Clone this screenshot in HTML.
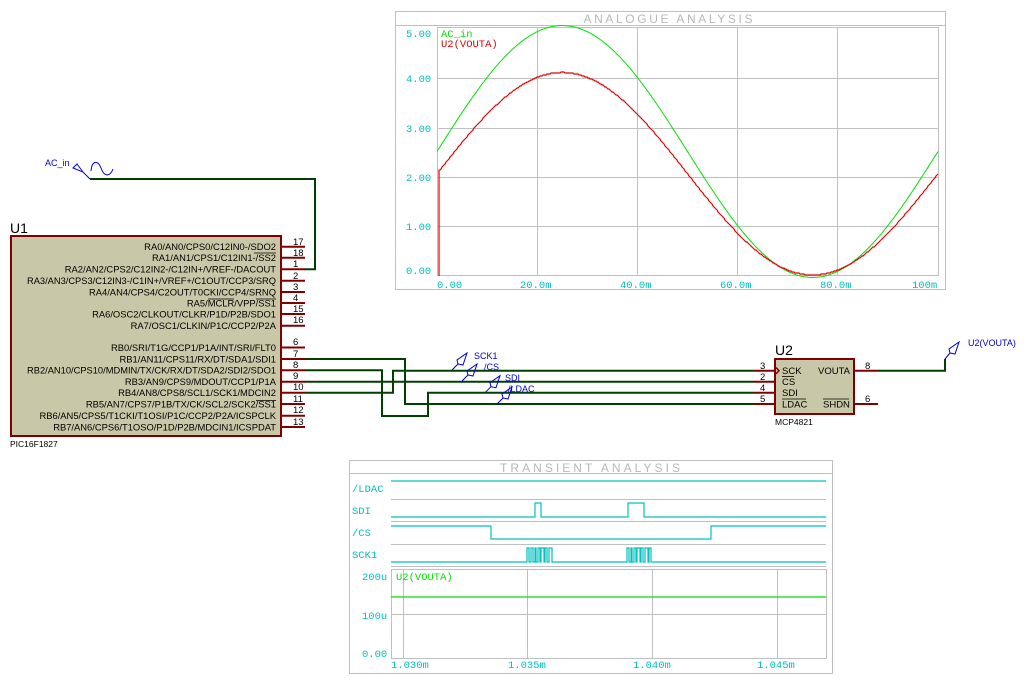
<!DOCTYPE html>
<html><head><meta charset="utf-8"><style>
html,body{margin:0;padding:0;background:#fff;width:1024px;height:685px;overflow:hidden}
svg{display:block}
.pl{font-family:"Liberation Sans",sans-serif;font-size:9.4px;fill:#000}
.pn{font-family:"Liberation Sans",sans-serif;font-size:9.5px;fill:#000}
.bl{font-family:"Liberation Sans",sans-serif;font-size:9px;fill:#0000cc}
.gm{font-family:"Liberation Mono",monospace;font-size:10.5px}
.tt{font-family:"Liberation Sans",sans-serif;font-size:12px}
</style></head><body>
<svg width="1024" height="685" viewBox="0 0 1024 685" xmlns="http://www.w3.org/2000/svg">
<!-- ANALOGUE GRAPH -->
<rect x="395.5" y="11.5" width="550" height="278" fill="#fff" stroke="#c0c0c0"/>
<line x1="395" y1="25.5" x2="946" y2="25.5" stroke="#c0c0c0"/>
<text x="668" y="23" text-anchor="middle" class="tt" fill="#b8b8b8" textLength="169" lengthAdjust="spacing">ANALOGUE ANALYSIS</text>
<g stroke="#c0c0c0" fill="none">
<rect x="437.5" y="27.5" width="501" height="248"/>
<line x1="537.5" y1="27" x2="537.5" y2="276"/><line x1="637.5" y1="27" x2="637.5" y2="276"/>
<line x1="737.5" y1="27" x2="737.5" y2="276"/><line x1="837.5" y1="27" x2="837.5" y2="276"/>
<line x1="437" y1="78.5" x2="938" y2="78.5"/><line x1="437" y1="128.5" x2="938" y2="128.5"/>
<line x1="437" y1="177.5" x2="938" y2="177.5"/><line x1="437" y1="226.5" x2="938" y2="226.5"/>
</g>
<g class="gm" fill="#00c0c0">
<text x="406" y="37">5.00</text><text x="406" y="82">4.00</text><text x="406" y="132">3.00</text>
<text x="406" y="181">2.00</text><text x="406" y="230">1.00</text><text x="406" y="274">0.00</text>
<text x="437" y="288">0.00</text><text x="520" y="288">20.0m</text><text x="620" y="288">40.0m</text>
<text x="720" y="288">60.0m</text><text x="820" y="288">80.0m</text><text x="912" y="288">100m</text>
</g>
<path id="gc" fill="none" stroke="#00e000" stroke-width="1"/>
<path id="rc" fill="none" stroke="#e00000" stroke-width="1.2"/>
<text x="441" y="37" class="gm" fill="#00e000">AC_in</text>
<text x="441" y="47" class="gm" fill="#e00000">U2(VOUTA)</text>

<!-- TRANSIENT GRAPH -->
<rect x="349.5" y="460.5" width="483" height="213" fill="#fff" stroke="#c0c0c0"/>
<line x1="349" y1="473.5" x2="833" y2="473.5" stroke="#c0c0c0"/>
<text x="590" y="472" text-anchor="middle" class="tt" fill="#b8b8b8" textLength="180" lengthAdjust="spacing">TRANSIENT ANALYSIS</text>
<g stroke="#c0c0c0" fill="none">
<line x1="391" y1="499.5" x2="826" y2="499.5"/>
<line x1="391" y1="521.5" x2="826" y2="521.5"/>
<line x1="391" y1="544.5" x2="826" y2="544.5"/>
<line x1="391" y1="566.5" x2="826" y2="566.5"/>
<rect x="391.5" y="569.5" width="435" height="89"/>
<line x1="391" y1="614.5" x2="826" y2="614.5"/>
<line x1="403.5" y1="569" x2="403.5" y2="658"/><line x1="527.5" y1="569" x2="527.5" y2="658"/>
<line x1="652.5" y1="569" x2="652.5" y2="658"/><line x1="777.5" y1="569" x2="777.5" y2="658"/>
</g>
<g stroke="#00c0c0" fill="none" stroke-width="1.2">
<line x1="391" y1="481" x2="826" y2="481"/>
<path d="M391 517H535V503H541V517H628V503H644V517H826"/>
<path d="M391 526H491V539H711V526H826"/>
<path d="M391 562H527V548H529V562H531V548H533V562H535V548H536V562H538V548H540V562H541V548H544V562H545V548H547V562H549V548H552V562H627V548H629V562H631V548H632V562H634V548H636V562H637V548H640V562H641V548H643V562H645V548H648V562H649V548H651V562H826"/>
</g>
<line x1="391" y1="597" x2="826" y2="597" stroke="#00e000" stroke-width="1.2"/>
<g class="gm" fill="#00c0c0">
<text x="352" y="492">/LDAC</text><text x="352" y="514">SDI</text><text x="352" y="536">/CS</text><text x="352" y="558">SCK1</text>
<text x="362" y="580">200u</text><text x="362" y="619">100u</text><text x="362" y="657">0.00</text>
<text x="391" y="668">1.030m</text><text x="508" y="668">1.035m</text><text x="633" y="668">1.040m</text><text x="757" y="668">1.045m</text>
</g>
<text x="396" y="580" class="gm" fill="#00e000">U2(VOUTA)</text>

<!-- WIRES -->
<g stroke="#004000" stroke-width="2" fill="none">
<path d="M90 179H315V269.3H305"/>
<path d="M305 359H405V404H754"/>
<path d="M305 370.3H382V416H428V392.7H754"/>
<path d="M305 381.7H754"/>
<path d="M305 392.7H393V370.7H754"/>
<path d="M878 370.7H945V359"/>
</g>

<!-- AC_in generator -->
<g stroke="#0000cc" fill="none" stroke-width="1">
<path d="M90 179L83 172L73 168L77 164L83 172"/>
<path d="M91 171C92 160 98 160 101 168C104 177 110 177 113 169"/>
</g>
<text x="45" y="166" class="bl">AC_in</text>

<!-- probes -->
<g stroke="#0000cc" fill="none" stroke-width="1">
<path d="M452 370L458 364M458 364l-1 -4l10 -7l-4 12z"/>
<path d="M462 381L468 375M468 375l-1 -4l10 -7l-4 12z"/>
<path d="M485 392.7L491 386.7M491 386.7l-1 -4l10 -7l-4 12z"/>
<path d="M497 404L503 398M503 398l-1 -4l10 -7l-4 12z"/>
<path d="M945 359L950 353M950 353l-1 -4l10 -7l-4 12z"/>
</g>
<g class="bl"><text x="474" y="359">SCK1</text><text x="484" y="370">/CS</text><text x="505" y="381">SDI</text><text x="508" y="392">/LDAC</text><text x="968" y="346">U2(VOUTA)</text></g>

<!-- U1 -->
<text x="10" y="233" font-family="Liberation Sans,sans-serif" font-size="14" fill="#000">U1</text>
<rect x="11" y="236" width="270" height="200" fill="#c8c8a8" stroke="#800000" stroke-width="2"/>
<g stroke="#800000" stroke-width="2">
<line x1="282" y1="246.7" x2="305" y2="246.7"/><line x1="282" y1="257.7" x2="305" y2="257.7"/>
<line x1="282" y1="269.3" x2="305" y2="269.3"/><line x1="282" y1="280.7" x2="305" y2="280.7"/>
<line x1="282" y1="292" x2="305" y2="292"/><line x1="282" y1="303" x2="305" y2="303"/>
<line x1="282" y1="314" x2="305" y2="314"/><line x1="282" y1="325.7" x2="305" y2="325.7"/>
<line x1="282" y1="347.5" x2="305" y2="347.5"/><line x1="282" y1="359" x2="305" y2="359"/>
<line x1="282" y1="370.3" x2="305" y2="370.3"/><line x1="282" y1="381.7" x2="305" y2="381.7"/>
<line x1="282" y1="392.7" x2="305" y2="392.7"/><line x1="282" y1="404" x2="305" y2="404"/>
<line x1="282" y1="415.7" x2="305" y2="415.7"/><line x1="282" y1="427" x2="305" y2="427"/>
</g>
<g class="pn">
<text x="293" y="245">17</text><text x="293" y="256">18</text><text x="293" y="267">1</text><text x="293" y="279">2</text>
<text x="293" y="290">3</text><text x="293" y="301">4</text><text x="293" y="312">15</text><text x="293" y="323">16</text>
<text x="293" y="345">6</text><text x="293" y="357">7</text><text x="293" y="368">8</text><text x="293" y="379">9</text>
<text x="293" y="390">10</text><text x="293" y="402">11</text><text x="293" y="413">12</text><text x="293" y="425">13</text>
</g>
<g class="pl" text-anchor="end">
<text x="276" y="250">RA0/AN0/CPS0/C12IN0-/SDO2</text>
<text x="276" y="261">RA1/AN1/CPS1/C12IN1-/SS2</text>
<text x="276" y="272.5">RA2/AN2/CPS2/C12IN2-/C12IN+/VREF-/DACOUT</text>
<text x="276" y="284" textLength="249" lengthAdjust="spacingAndGlyphs">RA3/AN3/CPS3/C12IN3-/C1IN+/VREF+/C1OUT/CCP3/SRQ</text>
<text x="276" y="295.5">RA4/AN4/CPS4/C2OUT/T0CKI/CCP4/SRNQ</text>
<text x="276" y="306.5">RA5/MCLR/VPP/SS1</text>
<text x="276" y="317.5">RA6/OSC2/CLKOUT/CLKR/P1D/P2B/SDO1</text>
<text x="276" y="329">RA7/OSC1/CLKIN/P1C/CCP2/P2A</text>
<text x="276" y="351">RB0/SRI/T1G/CCP1/P1A/INT/SRI/FLT0</text>
<text x="276" y="362.5">RB1/AN11/CPS11/RX/DT/SDA1/SDI1</text>
<text x="276" y="373.5" textLength="249" lengthAdjust="spacingAndGlyphs">RB2/AN10/CPS10/MDMIN/TX/CK/RX/DT/SDA2/SDI2/SDO1</text>
<text x="276" y="385">RB3/AN9/CPS9/MDOUT/CCP1/P1A</text>
<text x="276" y="396">RB4/AN8/CPS8/SCL1/SCK1/MDCIN2</text>
<text x="276" y="407.5">RB5/AN7/CPS7/P1B/TX/CK/SCL2/SCK2/SS1</text>
<text x="276" y="419">RB6/AN5/CPS5/T1CKI/T1OSI/P1C/CCP2/P2A/ICSPCLK</text>
<text x="276" y="430.5">RB7/AN6/CPS6/T1OSO/P1D/P2B/MDCIN1/ICSPDAT</text>
</g>
<g stroke="#000" stroke-width="0.7">
<line x1="254" y1="253" x2="276" y2="253"/>
<line x1="208" y1="299" x2="234" y2="299"/><line x1="256" y1="299" x2="276" y2="299"/>
<line x1="256" y1="400.5" x2="276" y2="400.5"/>
</g>
<text x="10" y="447" font-family="Liberation Sans,sans-serif" font-size="8.5" fill="#000">PIC16F1827</text>

<!-- U2 -->
<text x="775" y="355" font-family="Liberation Sans,sans-serif" font-size="14" fill="#000">U2</text>
<rect x="775" y="359" width="79" height="55" fill="#c8c8a8" stroke="#800000" stroke-width="2"/>
<g stroke="#800000" stroke-width="2">
<line x1="754" y1="370.7" x2="775" y2="370.7"/><line x1="754" y1="381.7" x2="775" y2="381.7"/>
<line x1="754" y1="392.7" x2="775" y2="392.7"/><line x1="754" y1="404" x2="775" y2="404"/>
<line x1="855" y1="370.7" x2="878" y2="370.7"/><line x1="855" y1="404" x2="878" y2="404"/>
</g>
<path d="M776 367.5l3 3.2l-3 3.2" stroke="#800000" stroke-width="1.5" fill="none"/>
<g class="pn">
<text x="760" y="369">3</text><text x="760" y="380">2</text><text x="760" y="391">4</text><text x="760" y="402">5</text>
<text x="865" y="369">8</text><text x="865" y="402">6</text>
<text x="782" y="374">SCK</text><text x="782" y="385">CS</text><text x="782" y="396">SDI</text><text x="782" y="407.5">LDAC</text>
<text x="818" y="374">VOUTA</text><text x="823" y="407.5">SHDN</text>
</g>
<g stroke="#000" stroke-width="0.8">
<line x1="782" y1="376.5" x2="794" y2="376.5"/><line x1="782" y1="399" x2="806" y2="399"/><line x1="823" y1="399" x2="849" y2="399"/>
</g>
<text x="775" y="425" font-family="Liberation Sans,sans-serif" font-size="8.5" fill="#000">MCP4821</text>
</svg>
<script>
(function(){
var g="",r="";
for(var x=437;x<=938;x++){
 var t=(x-437)/501, s=Math.sin(2*Math.PI*t);
 var yg=275-49.4*(2.5+2.55*s);
 var yr=275-49.4*Math.max(0,(2.05+2.05*s));
 g+=(x==437?"M":"L")+x+" "+yg.toFixed(1);
 if(x==437) r="M439 276L439 "+(275-49.4*2.12).toFixed(1);
 else if(x>439) r+="L"+x+" "+Math.round(yr);
}
document.getElementById("gc").setAttribute("d",g);
document.getElementById("rc").setAttribute("d",r);
})();
</script>
</body></html>
